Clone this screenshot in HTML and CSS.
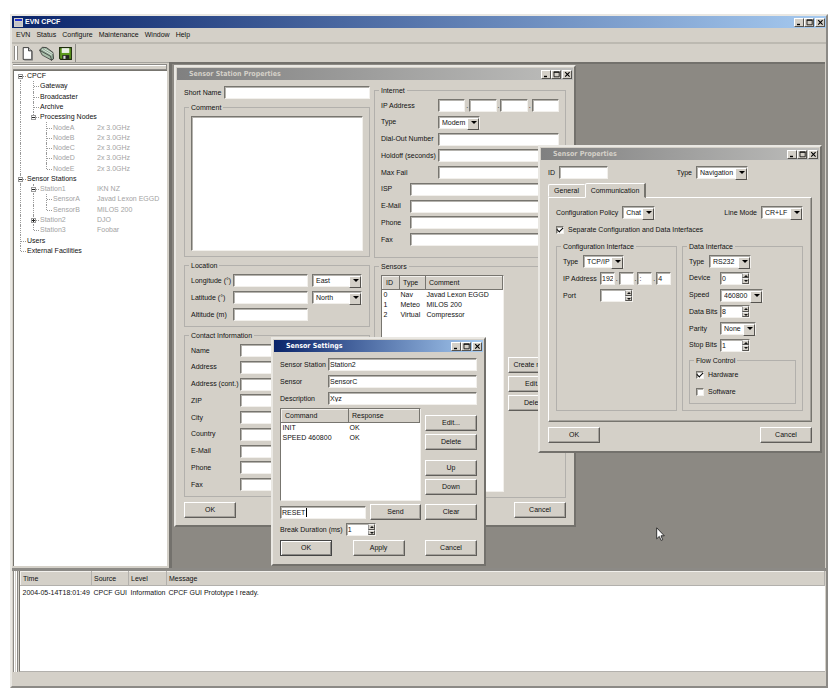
FILE: index.html
```html
<!DOCTYPE html>
<html lang="en">
<head>
<meta charset="utf-8">
<title>EVN CPCF</title>
<link rel="stylesheet" href="styles.css">
</head>
<body>
<div class="app">
  <header class="titlebar main-title">
    <svg class="app-icon" viewBox="0 0 9 9"><rect width="9" height="9" fill="#d4d0c8"/><rect x="1" y="1" width="7" height="2" fill="#2030d0"/><rect x="1" y="4" width="7" height="4" fill="#c4c4c8"/></svg>
    <h1>EVN CPCF</h1>
    <div class="controls">
      <button aria-label="Minimize"><svg viewBox="0 0 7 7"><path d="M1 5.5h3" stroke="#000" stroke-width="1.4"/></svg></button><button aria-label="Maximize"><svg viewBox="0 0 7 7"><path d="M1 1.2h5.2v4.6H1z" fill="none" stroke="#000" stroke-width=".8"/><path d="M.6 1h6" stroke="#000"/></svg></button><button class="close" aria-label="Close"><svg viewBox="0 0 7 7"><path d="M1.2 1.2l4.4 4.4M5.6 1.2L1.2 5.6" stroke="#000" stroke-width="1.1"/></svg></button>
    </div>
  </header>
  <nav class="menu">
    <button>EVN</button><button>Status</button><button>Configure</button><button>Maintenance</button><button>Window</button><button>Help</button>
  </nav>
  <div class="toolbar">
    <div class="tools">
      <span class="grip"></span>
      <button aria-label="New"><svg viewBox="0 0 14 14"><path d="M3 1.5h5l3 3v8H3z" fill="#fff" stroke="#222" stroke-width=".8"/><path d="M8 1.500v3h3" fill="#ccc" stroke="#222" stroke-width=".8"/><path d="M11.500 5v8H4" fill="none" stroke="#777"/></svg></button>
      <button aria-label="Open"><svg viewBox="0 0 14 14"><path d="M.6 4L3 1.200 7 1.500l6 4.500.6 6-2 1.200z" fill="#8fa894" stroke="#333" stroke-width=".8"/><path d="M3 3.200l9 5.300M5 2.500l7.800 4.600" stroke="#e8efe6" stroke-width=".8"/><path d="M.6 4l10 5.500 1.200 3.800-8.800-4.800z" fill="#a9bfaa" stroke="#333" stroke-width=".7"/></svg></button>
      <button aria-label="Save"><svg viewBox="0 0 14 14"><path d="M1.500 1.500h11v11h-10l-1-1z" fill="#5c9a1c" stroke="#1d2c0c"/><path d="M3.500 2h7v4.500h-7z" fill="#e9f0e4"/><path d="M4 8.500h6.500V12H4z" fill="#222"/><path d="M5 9.200h2V12H5z" fill="#ddd"/></svg></button>
    </div>
  </div>
  <main class="workspace">
    <aside class="sidebar">
      <div class="hgrip"></div>
      <ul class="tree">
        <li><span class="n"><i class="t first"><b class="minus"></b></i>CPCF</span></li>
        <li><span class="n"><i class="v"></i><i class="t"></i>Gateway</span></li>
        <li><span class="n"><i class="v"></i><i class="t"></i>Broadcaster</span></li>
        <li><span class="n"><i class="v"></i><i class="t"></i>Archive</span></li>
        <li><span class="n"><i class="v"></i><i class="l"><b class="minus"></b></i>Processing Nodes</span></li>
        <li class="dim"><span class="n"><i class="v"></i><i></i><i class="t"></i>NodeA</span><span>2x 3.0GHz</span></li>
        <li class="dim"><span class="n"><i class="v"></i><i></i><i class="t"></i>NodeB</span><span>2x 3.0GHz</span></li>
        <li class="dim"><span class="n"><i class="v"></i><i></i><i class="t"></i>NodeC</span><span>2x 3.0GHz</span></li>
        <li class="dim"><span class="n"><i class="v"></i><i></i><i class="t"></i>NodeD</span><span>2x 3.0GHz</span></li>
        <li class="dim"><span class="n"><i class="v"></i><i></i><i class="l"></i>NodeE</span><span>2x 3.0GHz</span></li>
        <li><span class="n"><i class="t"><b class="minus"></b></i>Sensor Stations</span></li>
        <li class="dim"><span class="n"><i class="v"></i><i class="t"><b class="minus"></b></i>Station1</span><span>IKN NZ</span></li>
        <li class="dim"><span class="n"><i class="v"></i><i class="v"></i><i class="t"></i>SensorA</span><span>Javad Lexon EGGD</span></li>
        <li class="dim"><span class="n"><i class="v"></i><i class="v"></i><i class="l"></i>SensorB</span><span>MILOS 200</span></li>
        <li class="dim"><span class="n"><i class="v"></i><i class="t"><b class="minus plus"></b></i>Station2</span><span>DJO</span></li>
        <li class="dim"><span class="n"><i class="v"></i><i class="l"></i>Station3</span><span>Foobar</span></li>
        <li><span class="n"><i class="t"></i>Users</span></li>
        <li><span class="n"><i class="l"></i>External Facilities</span></li>
      </ul>
    </aside>
    <div class="mdi">
      <section class="win station">
        <header class="titlebar"><h2>Sensor Station Properties</h2>
          <div class="controls"><button aria-label="Minimize"><svg viewBox="0 0 7 7"><path d="M1 5.5h3" stroke="#000" stroke-width="1.4"/></svg></button><button aria-label="Maximize"><svg viewBox="0 0 7 7"><path d="M1 1.2h5.2v4.6H1z" fill="none" stroke="#000" stroke-width=".8"/><path d="M.6 1h6" stroke="#000"/></svg></button><button class="close" aria-label="Close"><svg viewBox="0 0 7 7"><path d="M1.2 1.2l4.4 4.4M5.6 1.2L1.2 5.6" stroke="#000" stroke-width="1.1"/></svg></button></div>
        </header>
        <div class="body">
          <div class="columns">
            <div class="stack">
              <div class="row"><label class="short" for="sn">Short Name</label><input class="grow" id="sn"></div>
              <fieldset class="comment"><legend>Comment</legend><textarea aria-label="Comment"></textarea></fieldset>
              <fieldset><legend>Location</legend>
                <div class="rows three loc">
                  <div class="row"><label for="lon">Longitude (°)</label><input id="lon"><span class="combo"><select aria-label="Longitude direction"><option>East</option></select></span></div>
                  <div class="row"><label for="lat">Latitude (°)</label><input id="lat"><span class="combo"><select aria-label="Latitude direction"><option>North</option></select></span></div>
                  <div class="row"><label for="alt">Altitude (m)</label><input id="alt"></div>
                </div>
              </fieldset>
              <fieldset><legend>Contact Information</legend>
                <div class="rows nine contact">
                  <div class="row"><label for="c1">Name</label><input class="grow" id="c1"></div>
                  <div class="row"><label for="c2">Address</label><input class="grow" id="c2"></div>
                  <div class="row"><label for="c3">Address (cont.)</label><input class="grow" id="c3"></div>
                  <div class="row"><label for="c4">ZIP</label><input class="grow" id="c4"></div>
                  <div class="row"><label for="c5">City</label><input class="grow" id="c5"></div>
                  <div class="row"><label for="c6">Country</label><input class="grow" id="c6"></div>
                  <div class="row"><label for="c7">E-Mail</label><input class="grow" id="c7"></div>
                  <div class="row"><label for="c8">Phone</label><input class="grow" id="c8"></div>
                  <div class="row"><label for="c9">Fax</label><input class="grow" id="c9"></div>
                </div>
              </fieldset>
            </div>
            <div class="stack">
              <fieldset class="fill"><legend>Internet</legend>
                <div class="rows nine net">
                  <div class="row"><label for="ip1">IP Address</label><span class="ip grow"><input id="ip1">.<input aria-label="IP 2">.<input aria-label="IP 3">.<input aria-label="IP 4"></span></div>
                  <div class="row"><label for="nt">Type</label><span class="combo"><select id="nt"><option>Modem</option></select></span></div>
                  <div class="row"><label for="n3">Dial-Out Number</label><input class="grow" id="n3"></div>
                  <div class="row"><label for="n4">Holdoff (seconds)</label><input class="grow" id="n4"></div>
                  <div class="row"><label for="n5">Max Fail</label><input class="grow" id="n5"></div>
                  <div class="row slim"><label for="n6">ISP</label><input class="grow" id="n6"></div>
                  <div class="row slim"><label for="n7">E-Mail</label><input class="grow" id="n7"></div>
                  <div class="row slim"><label for="n8">Phone</label><input class="grow" id="n8"></div>
                  <div class="row slim"><label for="n9">Fax</label><input class="grow" id="n9"></div>
                </div>
              </fieldset>
              <fieldset class="sensors"><legend>Sensors</legend>
                <div class="sensor-row">
                  <div class="list">
                    <table><colgroup><col class="w-id"><col class="w-type"><col></colgroup>
                      <thead><tr><th>ID</th><th>Type</th><th>Comment</th></tr></thead>
                      <tbody><tr><td>0</td><td>Nav</td><td>Javad Lexon EGGD</td></tr><tr><td>1</td><td>Meteo</td><td>MILOS 200</td></tr><tr><td>2</td><td>Virtual</td><td>Compressor</td></tr></tbody>
                    </table>
                  </div>
                  <div class="buttons"><button class="btn">Create new...</button><button class="btn">Edit...</button><button class="btn">Delete</button></div>
                </div>
              </fieldset>
            </div>
          </div>
          <footer class="foot"><button class="btn">OK</button><button class="btn">Cancel</button></footer>
        </div>
      </section>

      <section class="win props">
        <header class="titlebar"><h2>Sensor Properties</h2>
          <div class="controls"><button aria-label="Minimize"><svg viewBox="0 0 7 7"><path d="M1 5.5h3" stroke="#000" stroke-width="1.4"/></svg></button><button aria-label="Maximize"><svg viewBox="0 0 7 7"><path d="M1 1.2h5.2v4.6H1z" fill="none" stroke="#000" stroke-width=".8"/><path d="M.6 1h6" stroke="#000"/></svg></button><button class="close" aria-label="Close"><svg viewBox="0 0 7 7"><path d="M1.2 1.2l4.4 4.4M5.6 1.2L1.2 5.6" stroke="#000" stroke-width="1.1"/></svg></button></div>
        </header>
        <div class="body">
          <div class="row head"><label for="pid">ID</label><input id="pid"><span class="pair"><label for="pt">Type</label><span class="combo"><select id="pt"><option>Navigation</option></select></span></span></div>
          <div class="tabs"><button>General</button><button class="on">Communication</button></div>
          <div class="panel">
            <div class="row between">
              <span class="pair"><label for="cp">Configuration Policy</label><span class="combo c-chat"><select id="cp"><option>Chat</option></select></span></span>
              <span class="pair"><label for="lm">Line Mode</label><span class="combo c-line"><select id="lm"><option>CR+LF</option></select></span></span>
            </div>
            <label class="check sep"><input type="checkbox" checked>Separate Configuration and Data Interfaces</label>
            <div class="halves">
              <fieldset><legend>Configuration Interface</legend>
                <div class="rows three conf">
                  <div class="row"><label class="tight" for="ct">Type</label><span class="combo"><select id="ct"><option>TCP/IP</option></select></span></div>
                  <div class="row"><label for="i1">IP Address</label><span class="ip grow"><input id="i1" value="192">.<input aria-label="IP 2">.<input aria-label="IP 3" value=":">.<input aria-label="IP 4" value="4"></span></div>
                  <div class="row"><label for="po">Port</label><span class="spin"><input id="po"><i><b></b><b></b></i></span></div>
                </div>
              </fieldset>
              <fieldset><legend>Data Interface</legend>
                <div class="rows six data">
                  <div class="row"><label class="tight" for="dt">Type</label><span class="combo c-rs"><select id="dt"><option>RS232</option></select></span></div>
                  <div class="row"><label for="dv">Device</label><span class="spin"><input id="dv" value="0"><i><b></b><b></b></i></span></div>
                  <div class="row"><label for="sp">Speed</label><span class="combo c-speed"><select id="sp"><option>460800</option></select></span></div>
                  <div class="row"><label for="db">Data Bits</label><span class="spin"><input id="db" value="8"><i><b></b><b></b></i></span></div>
                  <div class="row"><label for="pa">Parity</label><span class="combo c-par"><select id="pa"><option>None</option></select></span></div>
                  <div class="row"><label for="sb">Stop Bits</label><span class="spin"><input id="sb" value="1"><i><b></b><b></b></i></span></div>
                </div>
                <fieldset class="flow"><legend>Flow Control</legend>
                  <label class="check"><input type="checkbox" checked>Hardware</label>
                  <label class="check"><input type="checkbox">Software</label>
                </fieldset>
              </fieldset>
            </div>
          </div>
          <footer class="foot"><button class="btn">OK</button><button class="btn">Cancel</button></footer>
        </div>
      </section>

      <section class="win settings active">
        <header class="titlebar"><h2>Sensor Settings</h2>
          <div class="controls"><button aria-label="Minimize"><svg viewBox="0 0 7 7"><path d="M1 5.5h3" stroke="#000" stroke-width="1.4"/></svg></button><button aria-label="Maximize"><svg viewBox="0 0 7 7"><path d="M1 1.2h5.2v4.6H1z" fill="none" stroke="#000" stroke-width=".8"/><path d="M.6 1h6" stroke="#000"/></svg></button><button class="close" aria-label="Close"><svg viewBox="0 0 7 7"><path d="M1.2 1.2l4.4 4.4M5.6 1.2L1.2 5.6" stroke="#000" stroke-width="1.1"/></svg></button></div>
        </header>
        <div class="body">
          <div class="rows three sets">
            <div class="row"><label for="s1">Sensor Station</label><input class="grow" id="s1" value="Station2"></div>
            <div class="row"><label for="s2">Sensor</label><input class="grow" id="s2" value="SensorC"></div>
            <div class="row"><label for="s3">Description</label><input class="grow" id="s3" value="Xyz"></div>
          </div>
          <div class="command-row">
            <div class="list">
              <table><colgroup><col class="w-cmd"><col></colgroup>
                <thead><tr><th>Command</th><th>Response</th></tr></thead>
                <tbody><tr><td>INIT</td><td>OK</td></tr><tr><td>SPEED 460800</td><td>OK</td></tr></tbody>
              </table>
            </div>
            <div class="buttons"><button class="btn">Edit...</button><button class="btn">Delete</button><button class="btn apart">Up</button><button class="btn">Down</button></div>
          </div>
          <div class="send-row"><span class="reset"><input aria-label="Command" value="RESET"><span class="caret"></span></span><button class="btn">Send</button><button class="btn">Clear</button></div>
          <div class="row break"><label for="bd">Break Duration (ms)</label><span class="spin"><input id="bd" value="1"><i><b></b><b></b></i></span></div>
          <footer class="foot"><button class="btn default">OK</button><button class="btn">Apply</button><button class="btn">Cancel</button></footer>
        </div>
      </section>
      <svg class="cursor" viewBox="0 0 9 15"><path d="M.7.8v11l2.600-2.400 1.800 4 1.600-.7-1.700-3.900h3.300z" fill="#fff" stroke="#222" stroke-width=".9"/></svg>
    </div>
  </main>
  <section class="log">
    <span class="grip"></span>
    <div class="log-list">
      <table><colgroup><col class="w-time"><col class="w-src"><col class="w-level"><col></colgroup>
        <thead><tr><th>Time</th><th>Source</th><th>Level</th><th>Message</th></tr></thead>
        <tbody><tr><td>2004-05-14T18:01:49</td><td>CPCF GUI</td><td>Information</td><td>CPCF GUI Prototype I ready.</td></tr></tbody>
      </table>
    </div>
  </section>
  <footer class="status"></footer>
</div>
</body>
</html>
```
FILE: styles.css
```css
:root {
  --face: #d4d0c8;
  --shade: #77756f;
  --line: #b2b0ac;
  --light: #f2f0ec;
}
* { box-sizing: border-box; }
body {
  margin: 0;
  min-height: 100vh;
  padding: 14px 7px 6px 10px;
  display: flex;
  background: #fff;
  color: #111;
  font: 7px/10px "Liberation Sans", Arial, sans-serif;
}
button, input, select, textarea { font: inherit; color: inherit; margin: 0; border-radius: 0; }
button { padding: 0; background: none; border: 0; white-space: nowrap; }
.app {
  flex: 1;
  display: flex;
  flex-direction: column;
  min-width: 0;
  background: var(--face);
  border: 2px solid;
  border-color: #e9e7e2 #8c8a86 #8c8a86 #e9e7e2;
}

/* title bars */
.titlebar {
  height: 12px;
  display: flex;
  align-items: center;
  padding: 0 1px 0 12px;
  background: linear-gradient(90deg, #808080, #bdbdbb);
  color: var(--face);
}
.titlebar h1, .titlebar h2 {
  flex: 1;
  margin: 0;
  font: bold 7px/10px "DejaVu Sans Condensed", "DejaVu Sans", sans-serif;
}
.active .titlebar, .main-title { background: linear-gradient(90deg, #0a246a, #a6caf0); color: #fff; }
.main-title { padding-left: 2px; gap: 2px; }
.titlebar h1 { font-family: "Liberation Sans", Arial, sans-serif; }
.app-icon { width: 9px; height: 9px; }
.controls { display: flex; }
.controls button {
  width: 10px;
  height: 9px;
  display: flex;
  align-items: center;
  justify-content: center;
  background: var(--face);
  border: 1px solid;
  border-color: #fff #55534f #55534f #fff;
}
.controls .close { margin-left: 1px; }
.controls svg { width: 7px; height: 7px; flex: none; }

/* menu and toolbar */
.menu { height: 16px; padding: 0 4px; display: flex; align-items: center; gap: 6px; border-bottom: 2px solid #bcb9b1; }
.toolbar { height: 18px; display: flex; }
.tools { display: flex; align-items: center; gap: 4px; padding: 0 2px; border-right: 1px solid #8c8a86; }
.tools button, .tools svg { width: 15px; height: 15px; display: block; }
.grip { width: 5px; align-self: stretch; border: solid #8c8a86; border-width: 0 1px; background: var(--face); box-shadow: inset 1px 0 #fff, inset -1px 0 #fff; }
.tools .grip { margin: 2px 0; width: 4px; margin-right: -2px; }

/* workspace */
.workspace { flex: 1; display: flex; min-height: 504px; }
.sidebar { flex: 0 0 157px; display: flex; flex-direction: column; padding: 1px 2px 2px 1px; border-top: 1px solid #a5a39d; }
.hgrip { height: 6px; border: solid #8c8a86; border-width: 1px 1px 1px 0; box-shadow: inset 0 1px #fff; }
.tree {
  flex: 1;
  margin: 0;
  padding: 0;
  list-style: none;
  background: #fff;
  border-left: 1px solid var(--shade);
  border-top: 1px solid var(--shade);
  display: grid;
  grid-template-rows: repeat(18, 1fr);
  align-content: start;
  padding-bottom: 310px;
}
.tree li { display: grid; grid-template-columns: 83px 1fr; min-height: 0; white-space: nowrap; align-items: center; }
.tree .n { display: flex; align-self: stretch; align-items: center; }
.tree .dim { color: #a3a3a3; }
.tree i { width: 13px; align-self: stretch; position: relative; flex: none; }
.tree i::before { content: ""; position: absolute; left: 6px; top: 0; bottom: 0; }
.tree .v::before, .tree .t::before, .tree .l::before { border-left: 1px dotted #999; }
.tree .l::before { bottom: 50%; }
.tree .first::before { top: 50%; }
.tree .t::after, .tree .l::after { content: ""; position: absolute; left: 7px; width: 5px; top: 50%; border-top: 1px dotted #999; }
.tree b { position: absolute; z-index: 1; left: 4px; top: 3px; width: 5px; height: 5px; border: 1px solid #999; background: linear-gradient(#222, #222) center / 3px 1px no-repeat #fff; }
.tree .plus { background: linear-gradient(#222, #222) center / 3px 1px no-repeat, linear-gradient(#222, #222) center / 1px 3px no-repeat #fff; }

.mdi {
  flex: 1;
  position: relative;
  overflow: hidden;
  background: #8c8983;
  border: solid #73716c;
  border-width: 2px 0 0 3px;
  margin-right: 1px;
}

/* child windows: free placement on the MDI canvas */
.win { position: absolute; background: var(--face); border: 2px solid; border-color: #eae8e3 #73716c #73716c #eae8e3; padding: 1px; }
.station { left: 2px; top: 1px; width: 402px; }
.props { left: 366px; top: 81px; width: 284px; }
.settings { left: 99px; top: 273px; width: 215px; }
.body { padding: 6px 7px; }
.columns { display: grid; grid-template-columns: 186fr 192fr; gap: 4px; }
.stack { display: flex; flex-direction: column; gap: 4px; min-width: 0; }
.stack .fill { height: 172px; }

fieldset { margin: 0; min-width: 0; border: 1px solid var(--line); padding: 4px 6px 5px; }
legend { margin-left: -2px; padding: 0 2px; line-height: 9px; height: 9px; }
.rows { display: flex; flex-direction: column; justify-content: space-between; }
.three { height: 47px; }
.six { height: 97px; }
.nine { height: 147px; }
.row { display: flex; align-items: center; height: 13px; white-space: nowrap; }
.row > label { flex: none; }
.grow { flex: 1; min-width: 0; }

input, textarea, .combo, .spin {
  background: #fff;
  border: 1px solid;
  border-color: var(--shade) var(--light) var(--light) var(--shade);
  box-shadow: inset 1px 1px #b5b3ae;
  outline: none;
}
input { height: 13px; padding: 0 1px; width: 49px; }
.ip { display: flex; align-items: center; gap: 1px; }
.ip input { flex: 1; width: 0; min-width: 0; }
textarea { display: block; width: 100%; height: 135px; resize: none; }

.combo { position: relative; display: flex; height: 13px; }
.combo select { appearance: none; border: 0; background: none; padding: 0 10px 0 3px; width: 100%; height: 11px; line-height: 11px; outline: none; }
.combo::after {
  content: "";
  position: absolute;
  right: 0;
  top: 1px;
  width: 10px;
  height: 10px;
  pointer-events: none;
  border: 1px solid;
  border-color: #fff #55534f #55534f #fff;
  background: var(--face);
}
.combo::before {
  content: "";
  position: absolute;
  z-index: 1;
  right: 2px;
  top: 4px;
  pointer-events: none;
  border: 3px solid transparent;
  border-top-color: #000;
  border-bottom: 0;
}
.spin { display: flex; width: 30px; height: 13px; }
.spin input { border: 0; box-shadow: none; background: none; flex: 1; width: 0; height: 11px; }
.spin i { width: 7px; display: flex; flex-direction: column; }
.spin b { flex: 1; background: var(--face); border: 1px solid; border-color: #eee #55534f #55534f #999; position: relative; }
.spin b::after { content: ""; position: absolute; left: 1px; top: 1px; border: 2px solid transparent; border-top: 0; border-bottom-color: #111; }
.spin b + b::after { border-top: 2px solid #111; border-bottom: 0; }

.btn { width: 52px; height: 16px; border: 1px solid; border-color: #fff #605e5a #605e5a #fff; box-shadow: inset -1px -1px #a5a29c; }
.foot { display: flex; justify-content: space-between; align-items: center; margin-top: 4px; }

/* lists */
.list { background: #fff; border: 1px solid; border-color: var(--shade) var(--light) var(--light) var(--shade); min-width: 0; }
table { width: 100%; table-layout: fixed; border-collapse: collapse; white-space: nowrap; }
th { height: 13px; padding: 0 3px; text-align: left; font-weight: normal; background: var(--face); border: 1px solid; border-color: var(--light) var(--shade) var(--shade) var(--light); }
td { padding: 0 1px; height: 10px; line-height: 10px; }
.w-id { width: 17px; }
.w-type { width: 26px; }
.w-cmd { width: 67px; }
.buttons { display: flex; flex-direction: column; justify-content: center; gap: 3px; }
.apart { margin-top: 7px; }

/* station window */
.short { width: 40px; }
.loc label { width: 42px; }
.loc input { width: 75px; }
.loc .combo { width: 50px; margin-left: 4px; }
.contact label { width: 49px; }
.net label { width: 57px; }
.net .slim label { width: 29px; }
.net .combo { width: 42px; }
.sensors { padding-right: 5px; }
.sensor-row { display: grid; grid-template-columns: 1fr 52px; gap: 4px; height: 217px; }

/* sensor properties window */
.head label { width: 11px; }
.head .pair { margin-left: auto; margin-right: 64px; }
.pair { display: flex; align-items: center; gap: 4px; }
.head .pair label { width: auto; }
.head .combo { width: 52px; }
.tabs { display: flex; align-items: flex-end; height: 18px; }
.tabs button { height: 13px; width: 37px; border: 1px solid; border-color: #fff transparent transparent #fff; border-top-left-radius: 2px; }
.tabs .on { height: 15px; width: 61px; border-right: 2px solid var(--shade); background: var(--face); position: relative; margin-bottom: -1px; }
.panel { border: 1px solid; border-color: #fff var(--shade) var(--shade) #fff; box-shadow: inset -1px -1px #a5a29c; padding: 8px 8px 10px 7px; }
.between { justify-content: space-between; }
.c-chat { width: 33px; }
.c-line { width: 42px; }
.check { display: flex; align-items: center; gap: 4px; height: 13px; }
.check input { appearance: none; width: 8px; height: 8px; padding: 0; display: grid; place-items: center; }
.check input:checked::before { content: ""; width: 5px; height: 3px; border: solid #000; border-width: 0 0 1px 1px; rotate: -45deg; translate: 0 -1px; }
.sep { margin: 4px 0 6px; }
.halves { display: grid; grid-template-columns: 1fr 1fr; gap: 5px; }
.halves > fieldset { padding-bottom: 6px; }
.conf label { width: 37px; }
.data label { width: 31px; }
.row > .tight { width: 20px; }
.conf .combo { width: 41px; }
.conf .ip { margin-right: -1px; }
.conf .spin { width: 33px; }
.c-rs { width: 42px; }
.c-speed { width: 43px; }
.c-par { width: 36px; }
.flow { margin-top: 4px; padding: 3px 6px 5px; }
.flow .check + .check { margin-top: 4px; }
.props .foot { margin-top: 5px; }
.props .body { padding-bottom: 7px; }

/* sensor settings window */
.settings .body { padding: 6px 6px 7px; }
.sets label { width: 48px; }
.command-row { display: grid; grid-template-columns: 1fr 52px; gap: 4px; height: 93px; margin-top: 3px; }
.send-row { display: grid; grid-template-columns: 86px 1fr 52px; gap: 4px; align-items: center; margin-top: 3px; }
.send-row .btn { width: 100%; }
.reset { position: relative; display: flex; }
.reset input { width: 100%; }
.caret { position: absolute; left: 26px; top: 2px; width: 1px; height: 9px; background: #000; }
.break { margin-top: 3px; gap: 3px; }
.settings .foot { margin-top: 4px; }
.default { border-color: #444; box-shadow: inset 1px 1px #fff, inset -1px -1px #8c8a86; }

.cursor { position: absolute; left: 484px; top: 463px; width: 9px; height: 15px; }

/* message log */
.log { flex: none; height: 105px; display: flex; padding: 0 1px 1px; border-top: 3px solid #8c8a86; }
.log-list { flex: 1; margin-left: 1px; background: #fff; border-left: 1px solid var(--shade); border-bottom: 1px solid var(--line); min-width: 0; }
.log th { height: 14px; padding: 0 2px; border-color: var(--light) var(--line) var(--line) var(--light); }
.log td { height: 15px; padding: 0 2px; }
.w-time { width: 71px; }
.w-src { width: 37px; }
.w-level { width: 38px; }
.status { height: 13px; flex: none; }
```
